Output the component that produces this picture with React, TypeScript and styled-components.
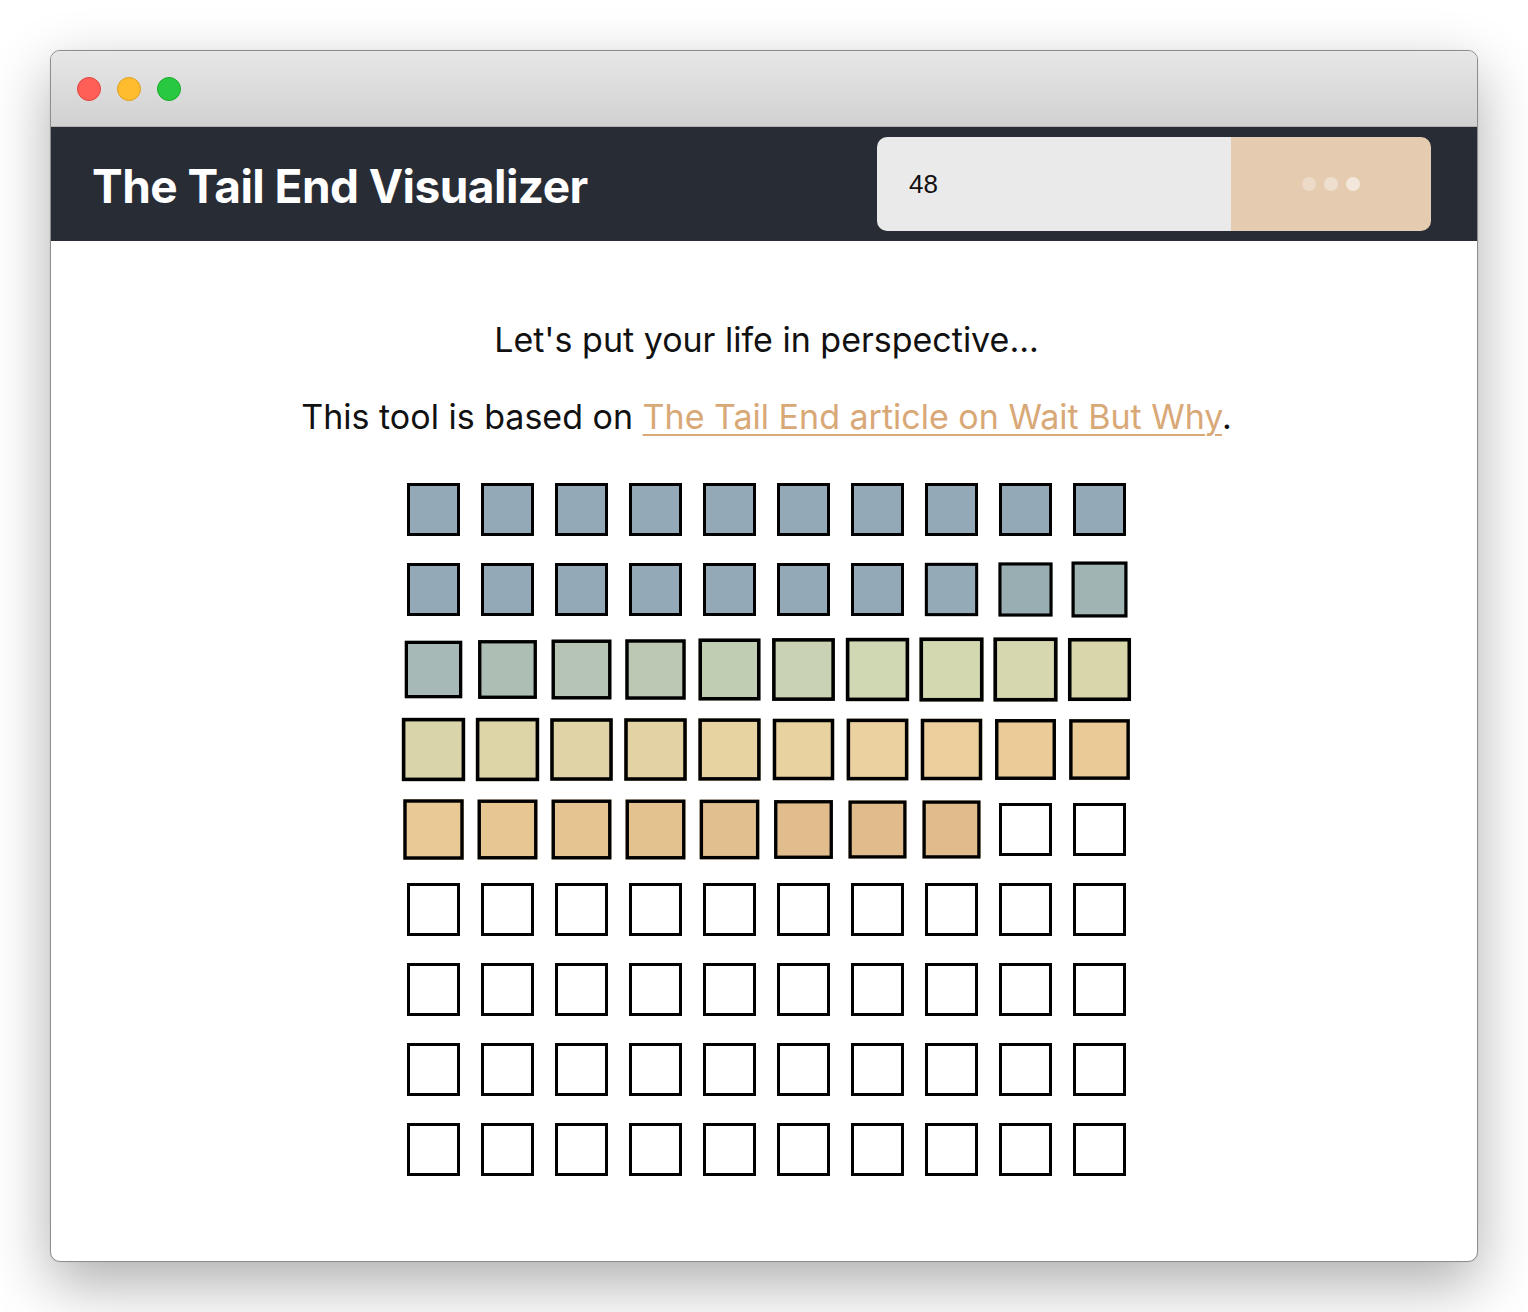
import React from "react";
import styled, { createGlobalStyle } from "styled-components";

const GlobalStyle = createGlobalStyle`
  html, body {
    margin: 0;
    padding: 0;
    background: #ffffff;
  }
  body {
    font-family: Inter, "Noto Sans", "Liberation Sans", sans-serif;
    -webkit-font-smoothing: antialiased;
  }
  * { box-sizing: border-box; }
`;

const Page = styled.div`
  padding: 50px 50px 50px 50px;
`;

const Window = styled.div`
  height: 1212px;
  display: flex;
  flex-direction: column;
  border: 1px solid #8e8e8e;
  border-radius: 10px;
  overflow: hidden;
  background: #ffffff;
  box-shadow: 0 22px 60px rgba(0, 0, 0, 0.32), 0 0 1px rgba(0, 0, 0, 0.2);
`;

const TitleBar = styled.div`
  height: 76px;
  flex: none;
  display: flex;
  align-items: center;
  gap: 16px;
  padding-left: 26px;
  background: linear-gradient(#e7e7e7, #d1d1d1);
  border-bottom: 1px solid #b4b4b4;
`;

const Light = styled.span<{ $fill: string; $edge: string }>`
  width: 24px;
  height: 24px;
  border-radius: 50%;
  background: ${(p) => p.$fill};
  border: 1px solid ${(p) => p.$edge};
`;

const Header = styled.header`
  height: 114px;
  flex: none;
  display: flex;
  align-items: center;
  justify-content: space-between;
  padding: 0 46px 0 41px;
  background: #282c35;
`;

const Title = styled.h1`
  margin: 4px 0 0;
  color: #ffffff;
  font-family: Inter, "Noto Sans", sans-serif;
  font-weight: 700;
  font-size: 46px;
  letter-spacing: -0.55px;
`;

const Form = styled.form`
  display: flex;
  width: 554px;
  height: 94px;
  border-radius: 10px;
  overflow: hidden;
`;

const AgeInput = styled.input`
  flex: 1;
  min-width: 0;
  border: none;
  outline: none;
  padding: 0 0 0 32px;
  background: #eaeaea;
  color: #111111;
  font-family: "Liberation Sans", Arial, sans-serif;
  font-size: 26px;
`;

const SubmitButton = styled.button`
  width: 200px;
  flex: none;
  border: none;
  background: #e5cbb0;
  display: flex;
  align-items: center;
  justify-content: center;
  gap: 8px;
  cursor: pointer;
`;

const Dot = styled.span<{ $alpha: number }>`
  width: 14px;
  height: 14px;
  border-radius: 50%;
  background: rgba(255, 255, 255, ${(p) => p.$alpha});
`;

const Content = styled.main`
  flex: 1;
  display: flex;
  flex-direction: column;
  align-items: center;
  padding: 79px 0 0 5px;
`;

const Line = styled.p<{ $gap: number }>`
  margin: 0 0 ${(p) => p.$gap}px;
  font-family: Inter, "Noto Sans", sans-serif;
  font-size: 34px;
  line-height: 40px;
  color: #111111;
`;

const Link = styled.a`
  color: #d9a877;
  text-decoration: underline;
  text-decoration-thickness: 2px;
  text-underline-offset: 5px;
`;

const Grid = styled.div`
  display: grid;
  grid-template-columns: repeat(10, 53px);
  grid-auto-rows: 53px;
  column-gap: 21px;
  row-gap: 27px;
`;

const Week = styled.div<{ $filled: boolean }>`
  width: 53px;
  height: 53px;
  border: 3px solid #000000;
  background: ${(p) => (p.$filled ? "#93a9b8" : "#ffffff")};
`;

const FILLED = 48;
const TOTAL = 90;

const colors: Record<number, string> = {
  17: "#94aab7",
  18: "#99aeb3",
  19: "#a1b4b4",
  20: "#a6b9b6",
  21: "#adbfb5",
  22: "#b5c4b4",
  23: "#bcc8b3",
  24: "#c1cdb3",
  25: "#c9d2b3",
  26: "#d0d7b3",
  27: "#d4d8b1",
  28: "#d6d7ae",
  29: "#dad6ac",
  30: "#dad4ab",
  31: "#ddd4a8",
  32: "#e0d3a6",
  33: "#e3d3a4",
  34: "#e7d2a2",
  35: "#e8d2a0",
  36: "#ebd19f",
  37: "#edcf9e",
  38: "#ebcb98",
  39: "#eaca96",
  40: "#e9c995",
  41: "#e7c692",
  42: "#e5c491",
  43: "#e4c290",
  44: "#e2bf8e",
  45: "#e1bd8d",
  46: "#e0bc8c",
  47: "#e0bb8b",
};

const scales: Record<number, number> = {
  17: 1.005,
  18: 1.02,
  19: 1.055,
  20: 1.085,
  21: 1.11,
  22: 1.13,
  23: 1.14,
  24: 1.17,
  25: 1.185,
  26: 1.195,
  27: 1.21,
  28: 1.21,
  29: 1.19,
  30: 1.195,
  31: 1.195,
  32: 1.18,
  33: 1.18,
  34: 1.175,
  35: 1.16,
  36: 1.165,
  37: 1.16,
  38: 1.15,
  39: 1.145,
  40: 1.14,
  41: 1.13,
  42: 1.13,
  43: 1.13,
  44: 1.125,
  45: 1.11,
  46: 1.095,
  47: 1.095,
};

export default function App() {
  const weeks = Array.from({ length: TOTAL }, (_, i) => i);
  return (
    <>
      <GlobalStyle />
      <Page>
        <Window>
          <TitleBar>
            <Light $fill="#ff5f57" $edge="#e0443e" />
            <Light $fill="#febc2e" $edge="#dea123" />
            <Light $fill="#28c840" $edge="#1aab29" />
          </TitleBar>
          <Header>
            <Title>The Tail End Visualizer</Title>
            <Form onSubmit={(e) => e.preventDefault()}>
              <AgeInput type="text" defaultValue="48" />
              <SubmitButton type="submit" aria-label="Loading">
                <Dot $alpha={0.3} />
                <Dot $alpha={0.38} />
                <Dot $alpha={0.55} />
              </SubmitButton>
            </Form>
          </Header>
          <Content>
            <Line $gap={37}>Let's put your life in perspective...</Line>
            <Line $gap={46}>
              This tool is based on{" "}
              <Link href="#">The Tail End article on Wait But Why</Link>.
            </Line>
            <Grid>
              {weeks.map((i) => {
                const filled = i < FILLED;
                const style: React.CSSProperties = {};
                if (filled && colors[i]) style.background = colors[i];
                if (filled && scales[i]) style.transform = `scale(${scales[i]})`;
                return <Week key={i} $filled={filled} style={style} />;
              })}
            </Grid>
          </Content>
        </Window>
      </Page>
    </>
  );
}
